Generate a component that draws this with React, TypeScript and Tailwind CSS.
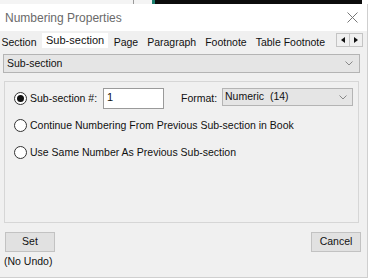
import React from "react";

const font = { fontFamily: '"Liberation Sans", Arial, sans-serif' };

function Radio({ checked }: { checked?: boolean }) {
  return (
    <div className="w-[13px] h-[13px] rounded-full border border-[#333] bg-white flex items-center justify-center shrink-0">
      {checked && <div className="w-[7px] h-[7px] rounded-full bg-[#111]" />}
    </div>
  );
}

function Chevron() {
  return (
    <svg width="8" height="5" viewBox="0 0 8 5" className="shrink-0">
      <path d="M0.5 0.5 L4 4 L7.5 0.5" fill="none" stroke="#888" strokeWidth="1" />
    </svg>
  );
}

export default function App() {
  const tabs = ["Section", "Sub-section", "Page", "Paragraph", "Footnote", "Table Footnote"];
  return (
    <div className="w-[370px] h-[278px] bg-white overflow-hidden text-[10.5px] text-[#111]" style={font}>
      <div className="flex h-[4px]">
        <div className="w-[133px] bg-[#f4f4f4]" />
        <div className="w-[1px] bg-[#9a9a9a]" />
        <div className="w-[18px] bg-[#f4f4f4]" />
        <div className="w-[3px] bg-[#1b7f6e]" />
        <div className="w-[207px] bg-[#0c0c0c]" />
        <div className="flex-1 bg-white" />
      </div>
      <div className="w-[368px] h-[274px] border-r border-b border-[#cfcfcf] flex flex-col">
        <div className="h-[27px] bg-white flex items-center justify-between pl-[5px] pr-[9px] shrink-0">
          <span className="text-[12px] text-[#6a6a6a]">Numbering Properties</span>
          <svg width="11" height="11" viewBox="0 0 11 11">
            <path d="M0.5 0.5 L10.5 10.5 M10.5 0.5 L0.5 10.5" stroke="#777" strokeWidth="1" fill="none" />
          </svg>
        </div>
        <div className="flex-1 bg-[#f0f0f0] flex flex-col">
          <div className="h-[17px] flex items-end relative">
            <div className="flex items-end ml-[-3px] h-full">
              {tabs.map((t) => {
                const sel = t === "Sub-section";
                return sel ? (
                  <div key={t} className="h-[15px] bg-white px-[4px] mx-[1px] flex items-start pt-[1px] leading-[12px] text-[11px]">
                    {t}
                  </div>
                ) : (
                  <div key={t} className="h-[15px] px-[4.5px] flex items-start pt-[3px] leading-[12px]">
                    {t}
                  </div>
                );
              })}
            </div>
            <div className="absolute right-[4px] top-[2px] flex">
              <div className="w-[14px] h-[14px] border border-[#c4c4c4] bg-[#f0f0f0] flex items-center justify-center">
                <svg width="4" height="6" viewBox="0 0 4 6"><path d="M4 0 L0 3 L4 6 Z" fill="#111" /></svg>
              </div>
              <div className="w-[13px] h-[14px] border border-l-0 border-[#c4c4c4] bg-[#f0f0f0] flex items-center justify-center">
                <svg width="4" height="6" viewBox="0 0 4 6"><path d="M0 0 L4 3 L0 6 Z" fill="#111" /></svg>
              </div>
            </div>
          </div>
          <div className="mt-[6px] ml-[3px] w-[357px] h-[19px] bg-[#e5e5e5] border border-[#b4b4b4] flex items-center justify-between pl-[3px] pr-[6px]">
            <span>Sub-section</span>
            <Chevron />
          </div>
          <div className="mt-[8px] ml-[4px] w-[355px] h-[142px] border border-[#d6d6d6] flex flex-col gap-[6px] pt-[6px] pl-[9px]">
            <div className="h-[21px] flex items-center">
              <Radio checked />
              <span className="ml-[3px] w-[73px]">Sub-section #:</span>
              <div className="w-[61px] h-[21px] bg-white border border-[#9a9a9a] pl-[3px] pt-[2px] leading-[12px] text-[11px]">1</div>
              <span className="ml-[17px] w-[41px]">Format:</span>
              <div className="self-start w-[131px] h-[18px] bg-[#e5e5e5] border border-[#b4b4b4] flex items-center justify-between pl-[2px] pr-[5px]">
                <span className="whitespace-pre">Numeric  (14)</span>
                <Chevron />
              </div>
            </div>
            <div className="h-[21px] flex items-center">
              <Radio />
              <span className="ml-[3px]">Continue Numbering From Previous Sub-section in Book</span>
            </div>
            <div className="h-[21px] flex items-center">
              <Radio />
              <span className="ml-[3px]">Use Same Number As Previous Sub-section</span>
            </div>
          </div>
          <div className="mt-[9px] flex justify-between pl-[5px] pr-[6px]">
            <div className="w-[50px] h-[20px] bg-[#e1e1e1] border border-[#c2c2c2] flex items-center justify-center">Set</div>
            <div className="w-[50px] h-[20px] bg-[#e1e1e1] border border-[#c2c2c2] flex items-center justify-center">Cancel</div>
          </div>
          <div className="mt-[3px] ml-[4px] leading-[12px]">(No Undo)</div>
        </div>
      </div>
    </div>
  );
}
